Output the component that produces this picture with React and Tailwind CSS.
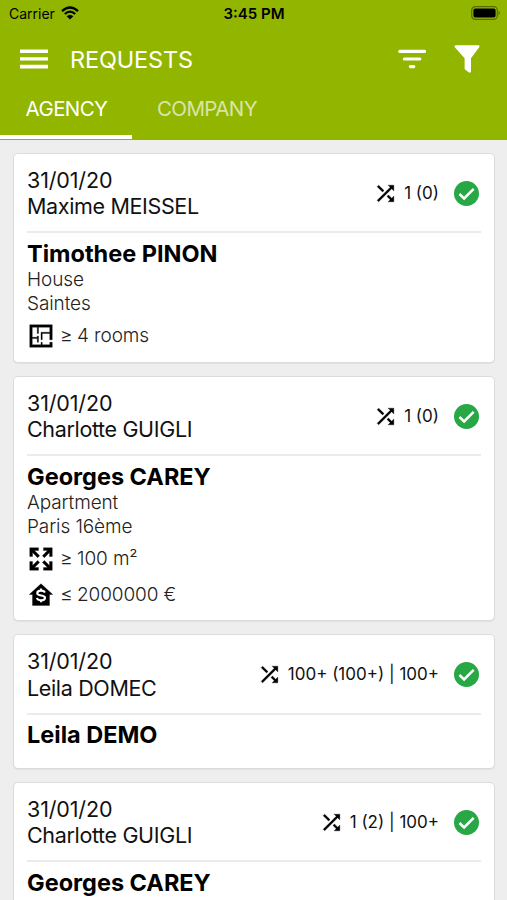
const INTER = "font-['Inter','Liberation_Sans',sans-serif]";

const REQUESTS = [
  { date: "31/01/20", agent: "Maxime MEISSEL", matches: "1 (0)", client: "Timothee PINON", places: ["House", "Saintes"], criteria: [{ icon: "rooms", text: "4 rooms", sign: "≥" }] },
  {
    date: "31/01/20", agent: "Charlotte GUIGLI", matches: "1 (0)", client: "Georges CAREY", places: ["Apartment", "Paris 16ème"],
    criteria: [{ icon: "surface", text: "100 m²", sign: "≥" }, { icon: "budget", text: "2000000 €", sign: "≤" }],
  },
  { date: "31/01/20", agent: "Leila DOMEC", matches: "100+ (100+) | 100+", client: "Leila DEMO", places: [], criteria: [] },
  { date: "31/01/20", agent: "Charlotte GUIGLI", matches: "1 (2) | 100+", client: "Georges CAREY", places: [], criteria: [] },
];

const ICONS = {
  rooms: "M10 5V10H9V5H5V13H9V12H10V17H9V14H5V19H12V17H13V19H19V17H21V21H3V3H21V15H19V10H13V15H12V9H19V5H10Z",
  surface: "M3 3H10V5.2H6.8L10.9 9.3L9.3 10.9L5.2 6.8V10H3ZM21 3V10H18.8V6.8L14.7 10.9L13.1 9.3L17.2 5.2H14V3ZM3 21V14H5.2V17.2L9.3 13.1L10.9 14.7L6.8 18.8H10V21ZM21 21H14V18.8H17.2L13.1 14.7L14.7 13.1L18.8 17.2V14H21Z",
  budget: "M12 3L2.6 11.6H5.2V20.3H18.8V11.6H21.4Z",
};

function CriteriaIcon({ name }) {
  return (
    <svg viewBox="0 0 24 24" className="w-[30px] h-[30px] shrink-0">
      <path d={ICONS[name]} stroke="#000" strokeWidth=".25" />
      {name === "budget" && (
        <path d="M12 6.8V8.4M12 16.2V17.8M15.2 10C14.6 8.9 13.4 8.5 12 8.5C10.2 8.5 9 9.3 9 10.6C9 13.2 15.2 11.6 15.2 14.1C15.2 15.4 13.8 16.2 12 16.2C10.4 16.2 9.1 15.6 8.7 14.4" fill="none" stroke="#fff" strokeWidth="1.7" />
      )}
    </svg>
  );
}

function StatusBar() {
  return (
    <div className="h-7 grid grid-cols-3 items-center pl-[9px] pr-[6px] text-black">
      <div className="flex items-center gap-[6px] -mt-px">
        <span className="text-[14px]">Carrier</span>
        <svg viewBox="0 0 18 14" className="w-[18px] h-[14px] -mt-px">
          <path d="M1 5.2Q9-2.2 17 5.2M3.8 8Q9 3.2 14.2 8" fill="none" stroke="#000" strokeWidth="2.3" />
          <path d="M9 13.4L5.7 10.2Q9 7.2 12.3 10.2Z" />
        </svg>
      </div>
      <span className="text-center text-[15px] font-semibold whitespace-nowrap -ml-[2px]">3:45 PM</span>
      <svg viewBox="0 0 30 14" className="w-[30px] h-[14px] justify-self-end -mt-[2px]">
        <rect x=".7" y=".7" width="25.6" height="12.6" rx="3.6" fill="none" stroke="#000" strokeOpacity=".4" strokeWidth="1.2" />
        <rect x="2.4" y="2.4" width="22.2" height="9.2" rx="2" />
        <path d="M27.6 4.8Q30 7 27.6 9.2Z" fillOpacity=".45" />
      </svg>
    </div>
  );
}

function Header() {
  return (
    <header className="h-[140px] bg-[#92b500] shrink-0 flex flex-col">
      <StatusBar />
      <div className="h-[62px] flex items-center pl-5 pr-[27px] text-white">
        <svg viewBox="0 0 28 20" className="w-7 h-5" fill="#fff">
          <path d="M0 .4H28V4H0ZM0 8.2H28V11.6H0ZM0 15.8H28V19.4H0Z" />
        </svg>
        <h1 className="ml-[22px] mt-px text-[23.5px] leading-none tracking-[-0.15px]">REQUESTS</h1>
        <svg viewBox="0 0 28 20" className="w-7 h-5 ml-auto" fill="none" stroke="#fff" strokeWidth="3.2" strokeLinecap="round">
          <path d="M1.8 2.4H26.6M6.4 10H21.8M12.4 17.6H15.8" />
        </svg>
        <svg viewBox="0 0 26 28" className="w-[26px] h-7 ml-[28px]" fill="#fff">
          <path d="M1.6.2H24.6Q26.2.8 25.2 2.2L17 13.2V26.6Q16.6 28.4 15 27.4L11.4 24.8Q10.6 24.2 10.6 23.2V13.2L.8 2.2Q0 .8 1.6.2Z" />
        </svg>
      </div>
      <nav className="h-[50px] flex text-[20.5px] tracking-[-0.6px] text-white">
        <div className="w-[132px] h-[49px] border-b-4 border-white flex items-center justify-center pb-[7px] pl-px">AGENCY</div>
        <div className="w-[150px] h-[45px] flex items-center justify-center pb-[7px] opacity-65">COMPANY</div>
      </nav>
    </header>
  );
}

function RequestCard({ request }) {
  return (
    <article className="bg-white border border-[#dcdcdc] rounded-[5px] px-[13px] pt-[13px] pb-2 shadow-[0_1px_1px_rgba(0,0,0,0.06)]">
      <div className="flex items-center h-[66.5px] pb-3 border-b-2 border-[#ebebeb]">
        <div className="text-[21.5px] leading-[26.5px] text-[#111]">
          <div className="tracking-[-0.15px]">{request.date}</div>
          <div className="tracking-[-0.35px]">{request.agent}</div>
        </div>
        <div className="ml-auto flex items-center pr-[2px]">
          <svg viewBox="0 0 24 24" className="w-[25px] h-[25px]">
            <path d="M10.59 9.17L5.41 4 4 5.41l5.17 5.17 1.42-1.41zM14.5 4l2.04 2.04L4 18.59 5.41 20 17.96 7.46 20 9.5V4h-5.5zm.33 9.41l-1.41 1.41 3.13 3.13L14.5 20H20v-5.5l-2.04 2.04-3.13-3.13z" stroke="#000" strokeWidth=".3" />
          </svg>
          <span className="ml-[6px] mt-px text-[17px] text-[#111]">{request.matches}</span>
          <svg viewBox="0 0 24 24" className="w-[25px] h-[25px] ml-[15px]">
            <circle cx="12" cy="12" r="12" fill="#28a745" />
            <path d="M5.2 12.5L9.7 16.8L18.9 7.5" fill="none" stroke="#fff" strokeWidth="2.4" />
          </svg>
        </div>
      </div>
      <h2 className="mt-[6.5px] text-[23.5px] leading-7 font-bold text-black">{request.client}</h2>
      <div className="min-h-[10.5px] pt-[0.5px] text-[19px] leading-[23.5px] tracking-[-0.1px] font-light text-[#222]">
        {request.places.map((place) => <div key={place}>{place}</div>)}
        {request.criteria.length > 0 && (
          <div className="pt-[3px]">
            {request.criteria.map((item) => (
              <div key={item.icon} className="h-[35.5px] flex items-center -ml-px">
                <CriteriaIcon name={item.icon} />
                <span className="ml-[4px] w-[17px] text-[19.5px]">{item.sign}</span>
                <span>{item.text}</span>
              </div>
            ))}
          </div>
        )}
      </div>
    </article>
  );
}

export default function App() {
  return (
    <div className={`w-full h-screen overflow-hidden bg-[#eeeeee] flex flex-col ${INTER}`}>
      <Header />
      <main className="pl-[13px] pr-3 pt-[12.75px] flex flex-col gap-[13px]">
        {REQUESTS.map((request, i) => <RequestCard key={i} request={request} />)}
      </main>
    </div>
  );
}
